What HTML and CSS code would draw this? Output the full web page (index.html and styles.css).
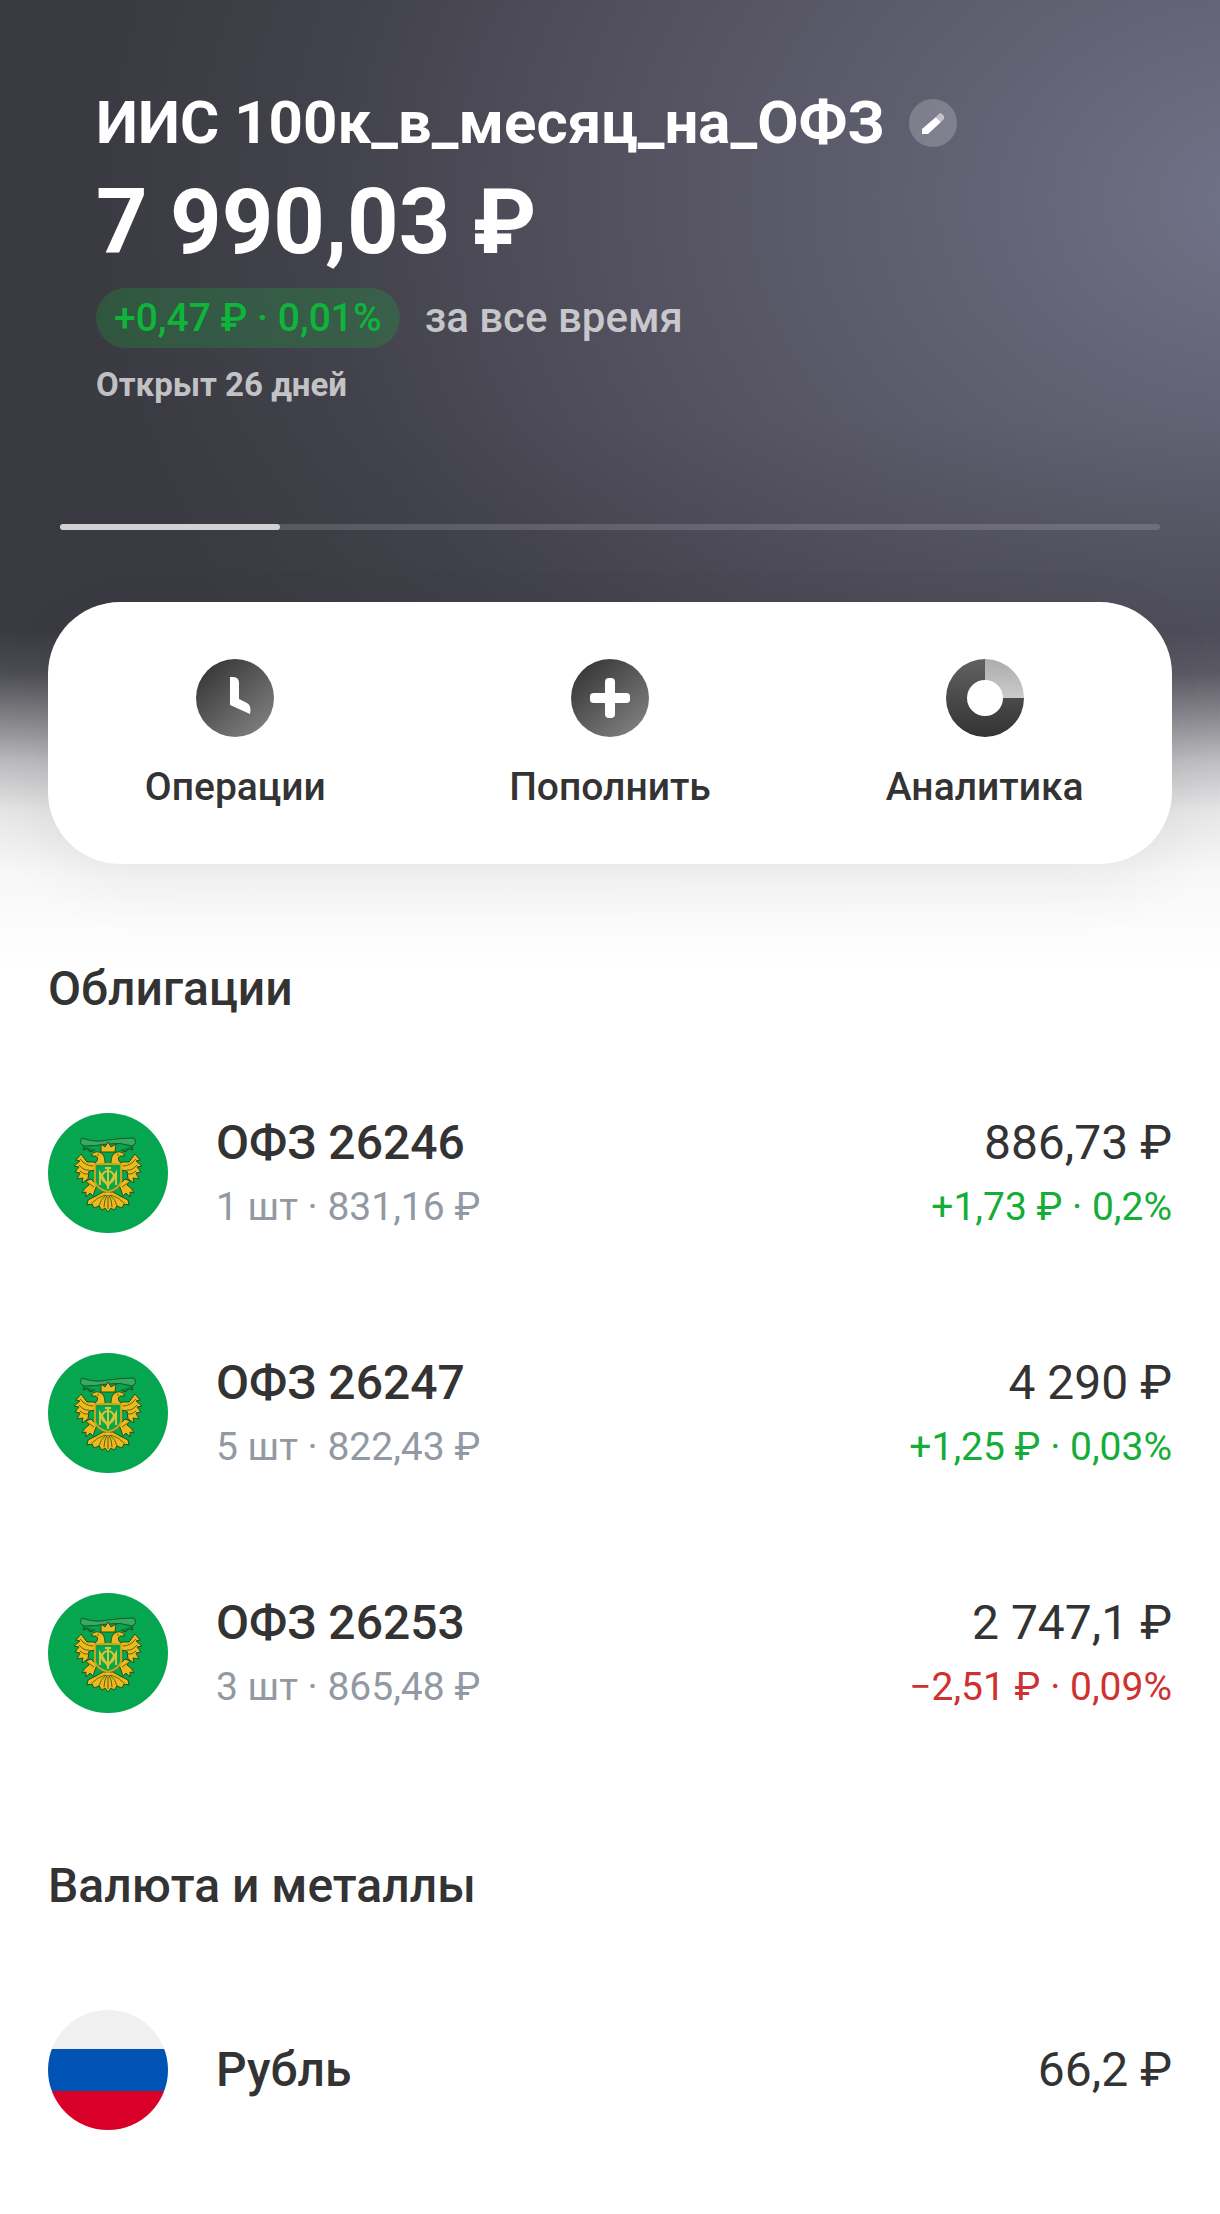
FILE: index.html
```html
<!DOCTYPE html>
<html lang="ru">
<head>
  <meta charset="UTF-8" />
  <meta name="viewport" content="width=device-width, initial-scale=1.0" />
  <title>ИИС 100к_в_месяц_на_ОФЗ</title>
  <link rel="stylesheet" href="styles.css">
</head>
<body>
  <!-- shared emblem, used by every bond row -->
  <svg class="sprite" aria-hidden="true">
    <symbol id="emblem" viewBox="0 0 120 120">
      <circle cx="60" cy="60" r="60" fill="#06a550" />
      <g stroke="#23521f" stroke-width="1" stroke-linejoin="round">
        <path d="M32 30 L34 25 Q47 30 60 27 Q73 25 86 25 L88 30 L84 33 Q72 29 60 31 Q47 33 36 33 Z" fill="#2fae66" />
        <path d="M36 33 l-1 4 5 -1 2 3 5 -2 M84 33 l1 4 -5 -1 -2 3 -5 -2" fill="#0c7f42" />
        <g fill="#efb91c">
          <path d="M53 39 L53 31 L57 34 L60 29 L63 34 L68 31 L67 39 Z" />
          <path d="M57 49 Q57 41 51 39 Q45 38 43 43 L47 43 Q51 44 49 48 L46 51 L57 53 Z" />
          <path d="M63 49 Q63 41 69 39 Q75 38 77 43 L73 43 Q69 44 71 48 L74 51 L63 53 Z" />
          <path d="M33 41 L28 47 L32 48 L26 53 L31 54 L27 59 L32 60 L29 66 L35 65 L34 70 L40 66 L41 58 L47 57 L47 49 L39 49 Z" />
          <path d="M87 41 L92 47 L88 48 L94 53 L89 54 L93 59 L88 60 L91 66 L85 65 L86 70 L80 66 L79 58 L73 57 L73 49 L81 49 Z" />
          <path d="M43 66 L38 68 L41 72 L37 75 L34 80 L38 79 L38 84 L42 80 L45 83 L47 77 L49 72 Z" />
          <path d="M77 66 L82 68 L79 72 L83 75 L86 80 L82 79 L82 84 L78 80 L75 83 L73 77 L71 72 Z" />
          <path d="M55 79 L48 83 L40 87 L39 92 L44 91 L46 95 L51 93 L54 97 L57 95 L60 99 L63 95 L66 97 L69 93 L74 95 L76 91 L81 92 L80 87 L72 83 L65 79 Z" />
        </g>
        <path d="M47 51 H73 V69 Q72 75 60 79 Q48 75 47 69 Z" fill="#06a550" stroke="#c9a51c" stroke-width="2" />
      </g>
      <g fill="none" stroke="#d9c435" stroke-width="2">
        <path d="M52 72 V60 L60 73 L68 60 V72 M60 55 V76 M57 55 H63" />
        <circle cx="60" cy="64" r="6" />
      </g>
      <g fill="none" stroke="#54651a" stroke-width="1">
        <path d="M32 46 Q38 53 45 53 M31 52 Q36 58 41 57 M32 58 Q36 62 40 61 M88 46 Q82 53 75 53 M89 52 Q84 58 79 57 M88 58 Q84 62 80 61" />
        <path d="M57 82 Q48 85 44 90 M58 82 Q52 87 51 93 M59 82 Q56 88 56 94 M60 82 V96 M61 82 Q64 88 64 94 M62 82 Q68 87 69 93 M63 82 Q72 85 76 90 M40 70 l6 4 M80 70 l-6 4 M49 42 h2 M69 42 h2" />
      </g>
    </symbol>
  </svg>

  <main class="page">
    <header class="account">
      <div class="title-row">
        <h1>ИИС 100к_в_месяц_на_ОФЗ</h1>
        <button class="edit" type="button" aria-label="Переименовать">
          <svg viewBox="0 0 48 48">
            <path d="M13 30 L27 18 L32 23 L19 35 H13 Z" fill="#fff" />
            <path d="M27 18 L30 15 Q31 13 33 15 L35 17 V20 L32 23 Z" fill="#c3c2cb" />
          </svg>
        </button>
      </div>
      <div class="balance">7 990,03 ₽</div>
      <div class="profit">
        <span class="badge">+0,47 ₽ · 0,01%</span>
        <span class="period">за все время</span>
      </div>
      <div class="opened">Открыт 26 дней</div>
    </header>

    <div class="progress"><div class="progress-fill" style="width: 20%"></div></div>

    <nav class="actions">
      <button type="button">
        <svg viewBox="0 0 78 78">
          <defs>
            <linearGradient id="disc" x1="0.15" y1="0.1" x2="0.85" y2="0.9">
              <stop offset="0" stop-color="#393939" />
              <stop offset="1" stop-color="#7d7d7d" />
            </linearGradient>
          </defs>
          <circle cx="39" cy="39" r="39" fill="url(#disc)" />
          <path d="M34 18 H37 Q43 18 43 24 V40 L51 44 Q56 47 54 55 L34 46 Z" fill="#fff" />
        </svg>
        <span>Операции</span>
      </button>
      <button type="button">
        <svg viewBox="0 0 78 78">
          <circle cx="39" cy="39" r="39" fill="url(#disc)" />
          <path d="M34 34 V23 Q34 19 38 19 H40 Q44 19 44 23 V34 H55 Q59 34 59 37 V41 Q59 44 55 44 H44 V55 Q44 59 40 59 H38 Q34 59 34 55 V44 H23 Q19 44 19 41 V37 Q19 34 23 34 Z" fill="#fff" />
        </svg>
        <span>Пополнить</span>
      </button>
      <button type="button">
        <svg viewBox="0 0 78 78">
          <defs>
            <linearGradient id="ring" x1="0" y1="0" x2="0" y2="1">
              <stop offset="0" stop-color="#616161" />
              <stop offset="1" stop-color="#333" />
            </linearGradient>
            <linearGradient id="slice" x1="0" y1="0" x2="0" y2="1">
              <stop offset="0" stop-color="#acacac" />
              <stop offset="1" stop-color="#cbcbcb" />
            </linearGradient>
          </defs>
          <path d="M39 0 A39 39 0 1 0 78 39 H57 A18 18 0 1 1 39 21 Z" fill="url(#ring)" />
          <path d="M39 0 A39 39 0 0 1 78 39 H57 A18 18 0 0 0 39 21 Z" fill="url(#slice)" />
        </svg>
        <span>Аналитика</span>
      </button>
    </nav>

    <section>
      <h2>Облигации</h2>
      <ul class="assets">
        <li>
          <svg class="logo"><use href="#emblem" /></svg>
          <div class="info">
            <div class="name">ОФЗ 26246</div>
            <div class="sub">1 шт · 831,16 ₽</div>
          </div>
          <div class="value">
            <div class="sum">886,73 ₽</div>
            <div class="change up">+1,73 ₽ · 0,2%</div>
          </div>
        </li>
        <li>
          <svg class="logo"><use href="#emblem" /></svg>
          <div class="info">
            <div class="name">ОФЗ 26247</div>
            <div class="sub">5 шт · 822,43 ₽</div>
          </div>
          <div class="value">
            <div class="sum">4 290 ₽</div>
            <div class="change up">+1,25 ₽ · 0,03%</div>
          </div>
        </li>
        <li>
          <svg class="logo"><use href="#emblem" /></svg>
          <div class="info">
            <div class="name">ОФЗ 26253</div>
            <div class="sub">3 шт · 865,48 ₽</div>
          </div>
          <div class="value">
            <div class="sum">2 747,1 ₽</div>
            <div class="change down">−2,51 ₽ · 0,09%</div>
          </div>
        </li>
      </ul>
    </section>

    <section>
      <h2>Валюта и металлы</h2>
      <ul class="assets">
        <li>
          <div class="logo flag"></div>
          <div class="info">
            <div class="name">Рубль</div>
          </div>
          <div class="value">
            <div class="sum">66,2 ₽</div>
          </div>
        </li>
      </ul>
    </section>
  </main>
</body>
</html>
```
FILE: styles.css
```css
* { box-sizing: border-box; }
body { margin: 0; background: #fff; color: #333; font-family: Roboto, sans-serif; }
h1, h2, ul { margin: 0; padding: 0; }
button { border: none; padding: 0; background: none; color: inherit; font: inherit; cursor: pointer; }
.sprite { display: block; width: 0; height: 0; }

/* dark glow on top that melts into white behind the actions card */
.page {
  padding: 87px 48px 24px;
  background:
    linear-gradient(rgba(255,255,255,0) 630px, rgba(255,255,255,0.09) 672px, rgba(255,255,255,0.38) 720px, rgba(255,255,255,0.66) 762px, rgba(255,255,255,0.87) 812px, rgba(255,255,255,0.96) 872px, #fff 970px),
    linear-gradient(rgba(58,58,66,0) 420px, rgba(58,58,66,0.4) 680px),
    radial-gradient(1180px 880px at 104% 200px, #717389 0%, #636375 24%, #545260 54%, #42424c 80%, #3a3a42 100%);
}

.account { padding: 0 48px; color: #fff; }
.title-row { display: flex; align-items: center; gap: 24px; }
h1 { font-size: 60px; line-height: 72px; font-weight: 700; }
.edit { width: 48px; height: 48px; border-radius: 50%; background: rgba(255,255,255,0.2); }
.edit svg { display: block; width: 48px; height: 48px; }
.balance { margin-top: 10px; font-size: 90px; line-height: 108px; font-weight: 700; }
.profit { display: flex; align-items: center; gap: 25px; margin-top: 11px; }
.badge { padding: 0 18px; border-radius: 30px; background: rgba(22,180,60,0.23); color: #0eb53a; font-size: 39px; line-height: 60px; font-weight: 500; }
.period { color: rgba(255,255,255,0.7); font-size: 42px; line-height: 60px; font-weight: 500; }
.opened { margin-top: 14px; color: rgba(255,255,255,0.7); font-size: 33px; line-height: 45px; font-weight: 700; }

.progress { height: 6px; margin: 117px 12px 0; border-radius: 3px; background: rgba(255,255,255,0.15); }
.progress-fill { height: 6px; border-radius: 3px; background: #d2d2d5; }

.actions { display: flex; margin-top: 72px; padding: 57px 0 53px; border-radius: 72px; background: #fff; box-shadow: 0 18px 66px rgba(0,0,0,0.06); }
.actions button { flex: 1; display: flex; flex-direction: column; align-items: center; gap: 26px; font-size: 39px; line-height: 48px; font-weight: 500; }
.actions svg { width: 78px; height: 78px; }

section { margin-top: 77px; }
.actions + section { margin-top: 89px; }
h2 { font-size: 48px; line-height: 72px; font-weight: 500; }
.assets { margin-top: 28px; list-style: none; }
.assets li { display: flex; align-items: center; gap: 48px; min-height: 240px; }
.logo { width: 120px; height: 120px; flex: none; }
.flag { border-radius: 50%; background: linear-gradient(#f0f0f0 39px, #0052b4 39px 81px, #d80027 81px); }
.info { flex: 1; }
.name, .sum { font-size: 48px; line-height: 68px; }
.name { font-weight: 500; }
.sub, .change { font-size: 39px; line-height: 60px; }
.sub { color: #9299a2; }
.value { text-align: right; }
.up { color: #13ad37; }
.down { color: #cf3131; }
```
